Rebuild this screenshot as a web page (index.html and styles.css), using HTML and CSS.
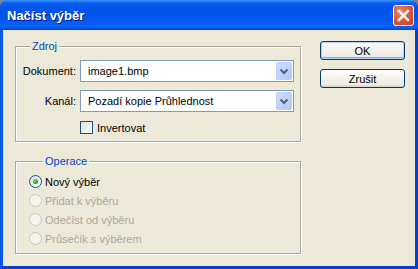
FILE: index.html
```html
<!DOCTYPE html>
<html>
<head>
    <title>Načíst výběr</title>
    <link rel="stylesheet" href="styles.css">
</head>
<body>
    <div class="window">
        <div class="titlebar">
            <span class="title">Načíst výběr</span>
            <div class="close">
                <svg width="21" height="21" viewBox="0 0 21 21">
                    <path d="M6 6 L15 15 M15 6 L6 15" stroke="#fff" stroke-width="2.4" stroke-linecap="square"/>
                </svg>
            </div>
        </div>
        <div class="content">
            <div class="main">
                <fieldset class="group source">
                    <legend>Zdroj</legend>
                    <label class="field-label">Dokument:</label>
                    <div class="combo">
                        <span class="combo-text">image1.bmp</span>
                        <span class="combo-btn">
                            <svg width="16" height="18" viewBox="0 0 16 18">
                                <path d="M4.5 7.5 L8 11 L11.5 7.5" fill="none" stroke="#4d6185" stroke-width="2"/>
                            </svg>
                        </span>
                    </div>
                    <label class="field-label">Kanál:</label>
                    <div class="combo">
                        <span class="combo-text">Pozadí kopie Průhlednost</span>
                        <span class="combo-btn">
                            <svg width="16" height="18" viewBox="0 0 16 18">
                                <path d="M4.5 7.5 L8 11 L11.5 7.5" fill="none" stroke="#4d6185" stroke-width="2"/>
                            </svg>
                        </span>
                    </div>
                    <div class="check-row">
                        <span class="checkbox"></span>
                        <span>Invertovat</span>
                    </div>
                </fieldset>
                <fieldset class="group operation">
                    <legend>Operace</legend>
                    <div class="radio-row">
                        <span class="radio checked"></span>
                        <span>Nový výběr</span>
                    </div>
                    <div class="radio-row disabled">
                        <span class="radio"></span>
                        <span>Přidat k výběru</span>
                    </div>
                    <div class="radio-row disabled">
                        <span class="radio"></span>
                        <span>Odečíst od výběru</span>
                    </div>
                    <div class="radio-row disabled">
                        <span class="radio"></span>
                        <span>Průsečík s výběrem</span>
                    </div>
                </fieldset>
            </div>
            <div class="buttons">
                <button class="btn default">OK</button>
                <button class="btn">Zrušit</button>
            </div>
        </div>
    </div>
</body>
</html>
```

FILE: styles.css
```css
html, body {
    margin: 0;
    background-color: #7a8597;
}
body {
    font-family: "Liberation Sans", Arial, sans-serif;
    font-size: 11px;
    color: #000;
}
.window {
    width: 418px;
    height: 269px;
    display: flex;
    flex-direction: column;
    border-radius: 7px 7px 0 0;
    overflow: hidden;
}
.titlebar {
    height: 30px;
    flex-shrink: 0;
    display: flex;
    align-items: center;
    justify-content: space-between;
    padding: 0 4px 0 7px;
    background: linear-gradient(to bottom, #3d95ff 0, #0a5ef4 3px, #0054e6 8px, #0055ea 18px, #0b63f6 26px, #0758ea 28px, #0343d2 30px);
}
.title {
    color: #fff;
    font-weight: bold;
    font-size: 13px;
    text-shadow: 1px 1px 0 #0a1d8c;
    margin-top: 1px;
}
.close {
    width: 21px;
    height: 21px;
    box-sizing: border-box;
    border: 1px solid #fff;
    border-radius: 3px;
    background: radial-gradient(circle at 35% 30%, #e98a6c 0, #d9553a 55%, #c43c1e 100%);
    margin-top: 1px;
}
.close svg {
    display: block;
    margin: -1px;
}
.content {
    flex: 1;
    display: flex;
    background-color: #ece9d8;
    border: 3px solid #0854e2;
    border-top: none;
    border-left-color: #0656e8;
    border-bottom-color: #0641d0;
    border-right-color: #0641d0;
}
.main {
    width: 286px;
    margin-left: 12px;
}
.group {
    margin: 10px 0 0;
    padding: 7px 6px 7px 0;
    border: 1px solid #aca899;
    box-shadow: inset 1px 1px 0 #fff, 1px 1px 0 #fff;
    min-width: 0;
}
.group legend {
    color: #0046d5;
    margin-left: 14px;
    padding: 0 2px;
    line-height: 13px;
    background-color: #ece9d8;
}
.source {
    display: grid;
    grid-template-columns: 60px 214px;
    column-gap: 4px;
    row-gap: 8px;
}
.field-label {
    text-align: right;
    align-self: center;
}
.combo {
    height: 22px;
    box-sizing: border-box;
    border: 1px solid #7f9db9;
    background-color: #fff;
    display: flex;
    align-items: center;
    justify-content: space-between;
    padding: 1px 1px 1px 7px;
}
.combo-btn {
    width: 16px;
    height: 18px;
    box-sizing: border-box;
    border-radius: 2px;
    background: linear-gradient(135deg, #cfdcfd 0, #c1d3fb 50%, #b2c7f7 100%);
    border: 1px solid #b9cdf8;
}
.combo-btn svg {
    display: block;
    margin: -1px;
}
.check-row {
    grid-column: 2;
    display: flex;
    align-items: center;
    gap: 4px;
    margin-top: 1px;
    height: 13px;
}
.checkbox {
    width: 13px;
    height: 13px;
    box-sizing: border-box;
    border: 1px solid #1c5180;
    background: linear-gradient(135deg, #dcdcd7 0, #f4f4f1 70%, #fff 100%);
}
.operation {
    margin-top: 13px;
    padding: 4px 0 5px 13px;
}
.radio-row {
    height: 19px;
    display: flex;
    align-items: center;
    gap: 3px;
}
.radio {
    width: 13px;
    height: 13px;
    box-sizing: border-box;
    border-radius: 50%;
    border: 1px solid #1c5180;
    background: linear-gradient(135deg, #dcdcd7 0, #f6f6f3 70%, #fff 100%);
    display: flex;
    align-items: center;
    justify-content: center;
}
.radio.checked::after {
    content: "";
    width: 5px;
    height: 5px;
    border-radius: 50%;
    background: radial-gradient(circle at 40% 35%, #7ce07c 0, #21a121 60%, #1b881b 100%);
}
.radio-row.disabled {
    color: #aca899;
}
.radio-row.disabled .radio {
    border-color: #cac8bb;
    background: #f5f4ea;
}
.buttons {
    display: flex;
    flex-direction: column;
    gap: 9px;
    margin: 11px 0 0 19px;
}
.btn {
    width: 85px;
    height: 19px;
    box-sizing: border-box;
    border: 1px solid #003c74;
    border-radius: 3px;
    background: linear-gradient(to bottom, #fff 0, #f4f3ee 40%, #ecebe6 85%, #d6d0c5 100%);
    font-family: "Liberation Sans", Arial, sans-serif;
    font-size: 11px;
    color: #000;
    padding: 0;
    cursor: pointer;
}
.btn.default {
    box-shadow: inset 0 0 0 1px #b7d0f7, inset 0 -1px 0 1px #89adf0;
}
```
